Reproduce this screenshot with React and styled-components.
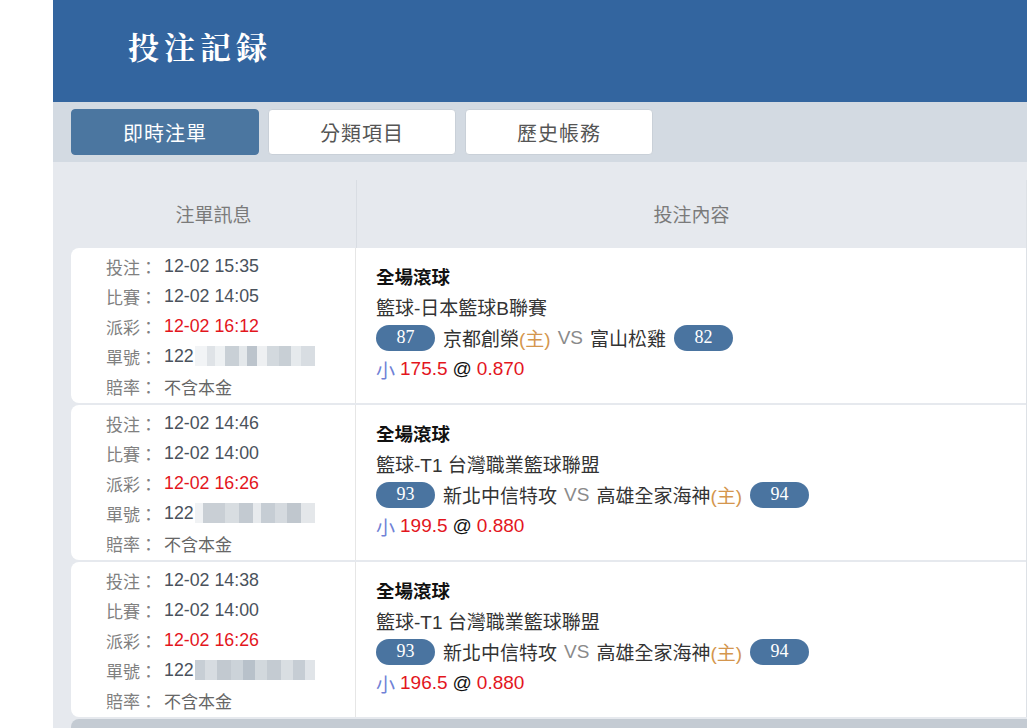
import React from "react";
import styled, { createGlobalStyle } from "styled-components";

const Global = createGlobalStyle`
  html, body { margin: 0; padding: 0; overflow: hidden; background: #fff; }
  body { font-family: "Liberation Sans", Arial, "Noto Sans CJK TC", sans-serif; }
  * { box-sizing: border-box; }
`;

const Page = styled.div`
  width: 1027px;
  height: 728px;
  overflow: hidden;
  padding-left: 53px;
`;

const Main = styled.div`
  width: 992px;
  background: #e6e9ee;
`;

const Header = styled.header`
  height: 102px;
  background: #33659f;
  display: flex;
  align-items: center;
  padding-left: 75px;
`;

const Title = styled.h1`
  margin: 0;
  margin-top: -12px;
  color: #fff;
  font-family: "Noto Serif CJK TC", "Noto Serif CJK JP", "Noto Sans CJK TC", serif;
  font-weight: 700;
  font-size: 31px;
  letter-spacing: 5px;
`;

const TabBar = styled.nav`
  background: #d3dae2;
  padding: 7px 18px;
  display: flex;
  gap: 9px;
`;

const Tab = styled.button`
  width: 188px;
  height: 46px;
  border-radius: 4px;
  border: 1px solid ${(p) => (p.$active ? "#4b76a0" : "#c9d0d8")};
  background: ${(p) => (p.$active ? "#4b76a0" : "#fff")};
  color: ${(p) => (p.$active ? "#fff" : "#555")};
  font-family: "Noto Sans CJK TC", sans-serif;
  font-size: 20px;
  letter-spacing: 1px;
  padding: 0;
  cursor: pointer;
`;

const Content = styled.section`
  padding: 18px 18px 0 18px;
`;

const Table = styled.div`
  border-right: 1px solid #dde1e6;
`;

const HeadRow = styled.div`
  display: grid;
  grid-template-columns: 285px 1fr;
  height: 68px;
`;

const HeadCell = styled.div`
  display: flex;
  align-items: center;
  justify-content: center;
  font-family: "Noto Sans CJK TC", sans-serif;
  font-size: 19px;
  color: #7a7a7a;
  border-left: ${(p) => (p.$divider ? "1px solid #d9dde3" : "none")};
  padding-bottom: 2px;
`;

const Row = styled.div`
  display: grid;
  grid-template-columns: 285px 1fr;
  height: 155px;
  margin-bottom: 2px;
  background: #fff;
  border-radius: 8px 0 0 8px;
`;

const InfoCell = styled.div`
  padding: 3px 0 2px 35px;
  border-right: 1px solid #e6e6e6;
`;

const InfoLine = styled.div`
  display: flex;
  height: 30px;
  align-items: center;
  font-size: 17px;
`;

const Label = styled.span`
  width: 58px;
  font-family: "Noto Sans CJK TC", sans-serif;
  color: #808080;
`;

const Value = styled.span`
  font-family: ${(p) =>
    p.$cjk ? '"Noto Sans CJK TC", sans-serif' : '"Liberation Sans", Arial, "Noto Sans CJK TC", sans-serif'};
  color: ${(p) => (p.$red ? "#e3161d" : p.$cjk ? "#666" : "#4a525c")};
  font-size: ${(p) => (p.$cjk ? "17px" : "17.8px")};
  display: flex;
  align-items: center;
`;

const Blur = styled.span`
  display: inline-block;
  width: 120px;
  height: 20px;
  margin-left: 1px;
  background: ${(p) => p.$bg};
  filter: blur(0.6px);
`;

const BetCell = styled.div`
  padding: 13px 0 0 20px;
`;

const BetLine = styled.div`
  display: flex;
  align-items: center;
  height: ${(p) => p.$h || 30}px;
  font-size: 19px;
  color: #333;
  font-family: "Liberation Sans", Arial, "Noto Sans CJK TC", sans-serif;
`;

const Market = styled(BetLine)`
  font-weight: 700;
  color: #111;
  font-family: "Noto Sans CJK TC", sans-serif;
  font-size: 18.5px;
`;

const Badge = styled.span`
  display: inline-flex;
  align-items: center;
  justify-content: center;
  width: 59px;
  height: 26px;
  border-radius: 13px;
  background: #4a74a0;
  color: #fff;
  font-family: "Liberation Serif", "Times New Roman", serif;
  font-size: 18px;
  margin-right: ${(p) => (p.$first ? "8px" : "0")};
  margin-left: ${(p) => (p.$first ? "0" : "8px")};
`;

const Home = styled.span`
  color: #d4964e;
`;

const Vs = styled.span`
  color: #8a8a8a;
  margin: 0 7px;
`;

const Side = styled.span`
  color: #6f82d6;
  font-family: "Noto Sans CJK TC", sans-serif;
  margin-right: 5px;
`;

const Red = styled.span`
  color: #e3161d;
`;

const At = styled.span`
  color: #111;
  margin: 0 5px;
`;

const Footer = styled.div`
  height: 30px;
  background: #c4cbd3;
  border-radius: 8px 0 0 0;
`;

const blurA =
  "linear-gradient(90deg, #f2f4f6 0 12px, #dfe3e7 12px 20px, #eef1f3 20px 30px, #c9d0d6 30px 44px, #e4e8eb 44px 52px, #bcc4cc 52px 62px, #eef0f2 62px 72px, #d3d9de 72px 84px, #c8cfd5 84px 96px, #e6eaed 96px 106px, #d8dde2 106px 120px)";
const blurB =
  "linear-gradient(90deg, #f0f2f4 0 8px, #c9cfd5 8px 30px, #d8dde1 30px 44px, #c3cad1 44px 58px, #e7eaed 58px 66px, #c6cdd4 66px 80px, #d5dadf 80px 92px, #c0c7ce 92px 106px, #e4e7ea 106px 120px)";
const blurC =
  "linear-gradient(90deg, #c7ced5 0 10px, #d7dce1 10px 22px, #c2c9d0 22px 36px, #ccd3d9 36px 48px, #b8c1ca 48px 60px, #d2d8dd 60px 72px, #c4cbd2 72px 86px, #d9dee2 86px 98px, #c6cdd4 98px 110px, #e0e4e8 110px 120px)";

const bets = [
  {
    bet: "12-02 15:35",
    match: "12-02 14:05",
    payout: "12-02 16:12",
    blur: blurA,
    league: "籃球-日本籃球B聯賽",
    home: "京都創榮",
    away: "富山松雞",
    homeFirst: true,
    s1: "87",
    s2: "82",
    line: "175.5",
    odds: "0.870",
  },
  {
    bet: "12-02 14:46",
    match: "12-02 14:00",
    payout: "12-02 16:26",
    blur: blurB,
    league: "籃球-T1 台灣職業籃球聯盟",
    home: "新北中信特攻",
    away: "高雄全家海神",
    homeFirst: false,
    s1: "93",
    s2: "94",
    line: "199.5",
    odds: "0.880",
  },
  {
    bet: "12-02 14:38",
    match: "12-02 14:00",
    payout: "12-02 16:26",
    blur: blurC,
    league: "籃球-T1 台灣職業籃球聯盟",
    home: "新北中信特攻",
    away: "高雄全家海神",
    homeFirst: false,
    s1: "93",
    s2: "94",
    line: "196.5",
    odds: "0.880",
  },
];

function BetRow({ b }) {
  return (
    <Row>
      <InfoCell>
        <InfoLine>
          <Label>投注：</Label>
          <Value>{b.bet}</Value>
        </InfoLine>
        <InfoLine>
          <Label>比賽：</Label>
          <Value>{b.match}</Value>
        </InfoLine>
        <InfoLine>
          <Label>派彩：</Label>
          <Value $red>{b.payout}</Value>
        </InfoLine>
        <InfoLine>
          <Label>單號：</Label>
          <Value>
            122
            <Blur $bg={b.blur} />
          </Value>
        </InfoLine>
        <InfoLine>
          <Label>賠率：</Label>
          <Value $cjk>不含本金</Value>
        </InfoLine>
      </InfoCell>
      <BetCell>
        <Market>全場滾球</Market>
        <BetLine>{b.league}</BetLine>
        <BetLine $h={33}>
          <Badge $first>{b.s1}</Badge>
          <span>{b.home}</span>
          {b.homeFirst && <Home>(主)</Home>}
          <Vs>VS</Vs>
          <span>{b.away}</span>
          {!b.homeFirst && <Home>(主)</Home>}
          <Badge>{b.s2}</Badge>
        </BetLine>
        <BetLine>
          <Side>小</Side>
          <Red>{b.line}</Red>
          <At>@</At>
          <Red>{b.odds}</Red>
        </BetLine>
      </BetCell>
    </Row>
  );
}

export default function App() {
  return (
    <>
      <Global />
      <Page>
        <Main>
          <Header>
            <Title>投注記録</Title>
          </Header>
          <TabBar>
            <Tab $active>即時注單</Tab>
            <Tab>分類項目</Tab>
            <Tab>歷史帳務</Tab>
          </TabBar>
          <Content>
            <Table>
              <HeadRow>
                <HeadCell>注單訊息</HeadCell>
                <HeadCell $divider>投注內容</HeadCell>
              </HeadRow>
              {bets.map((b, i) => (
                <BetRow key={i} b={b} />
              ))}
            </Table>
            <Footer />
          </Content>
        </Main>
      </Page>
    </>
  );
}
